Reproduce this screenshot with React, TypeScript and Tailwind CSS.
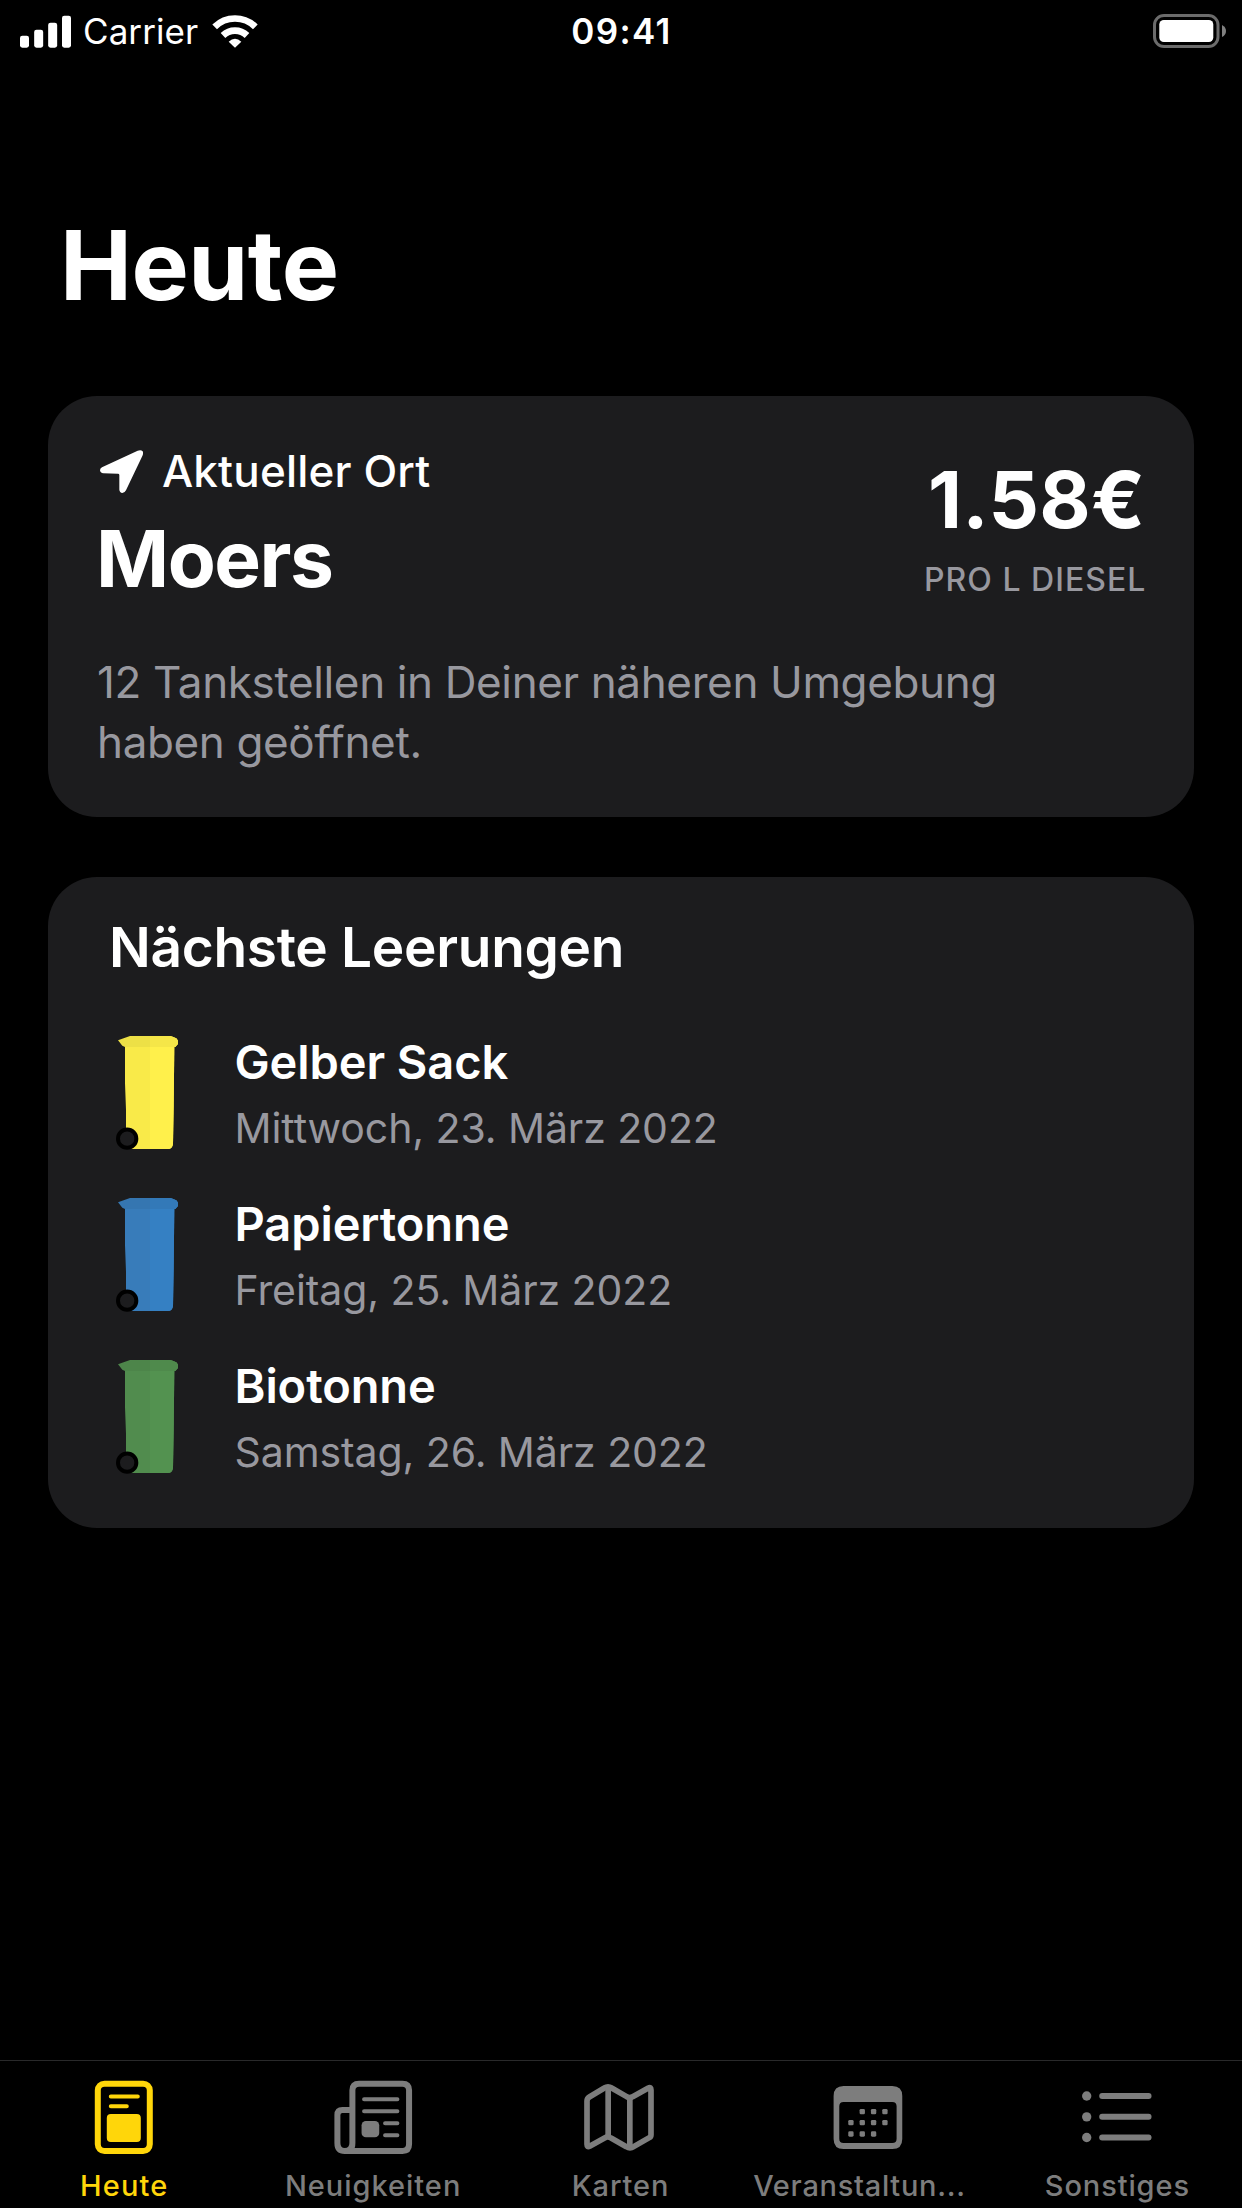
import type { ReactNode } from 'react';

type Bin = { name: string; date: string; left: string; right: string; lidLeft: string; lidRight: string };

const bins: Bin[] = [
  { name: 'Gelber Sack', date: 'Mittwoch, 23. März 2022', left: '#f9ea49', right: '#fff04b', lidLeft: '#ede046', lidRight: '#f5e648' },
  { name: 'Papiertonne', date: 'Freitag, 25. März 2022', left: '#387cba', right: '#3580c3', lidLeft: '#3576b1', lidRight: '#3379b8' },
  { name: 'Biotonne', date: 'Samstag, 26. März 2022', left: '#518c4e', right: '#539250', lidLeft: '#4d854a', lidRight: '#4f8a4c' },
];

function SignalIcon() {
  return (
    <svg className="h-[33px] w-[51px]" viewBox="60 40 153 99" fill="white">
      <rect x="60" y="102" width="27" height="36" rx="7" />
      <rect x="102.500" y="84" width="27" height="54" rx="7" />
      <rect x="144.500" y="63" width="27" height="75" rx="7" />
      <rect x="186" y="42" width="27" height="96" rx="7" />
    </svg>
  );
}

function WifiIcon() {
  return (
    <svg className="h-[34px] w-[46px]" viewBox="636 37 138 102" fill="none" stroke="white" strokeWidth="20">
      <path d="M644 75.500A87 87 0 0 1 766 75.500" />
      <path d="M669 101.500A52 52 0 0 1 741 101.500" />
      <path d="M686 120Q705 102 724 120L705 138Z" fill="white" stroke="none" />
    </svg>
  );
}

function BatteryIcon() {
  return (
    <svg className="h-[34px] w-[74px]" viewBox="0 0 74 34">
      <rect x="1.500" y="1.500" width="63.500" height="31" rx="9.500" fill="none" stroke="#6b6b6b" strokeWidth="3" />
      <rect x="6.300" y="6" width="54" height="22" rx="4.500" fill="white" />
      <path d="M69 11Q73 13 73 17T69 23Z" fill="#808080" />
    </svg>
  );
}

function LocationIcon() {
  return (
    <svg className="h-[43px] w-[43px]" viewBox="180 750 129 129" fill="white">
      <path d="M186 802L293 752Q303 748 308 754Q311 759 307 768L258 871Q254 879 247 879Q239 878 238 869V825Q238 821 234 821L190 820Q181 819 180 811Q180 805 186 802Z" />
    </svg>
  );
}

function BinIcon({ bin }: { bin: Bin }) {
  return (
    <svg className="mt-[7px] h-[115px] w-[63px] shrink-0" viewBox="78 78 189 345">
      <path d="M105 105H253L251 290L249 402Q247 417 234 417H108V300L105 220Z" fill={bin.left} />
      <path d="M180 105H253L251 290L249 402Q247 417 234 417H180Z" fill={bin.right} />
      <path d="M84 91L120 78H242L252 82Q262 85 264 92V102L256 111H105L97 107Z" fill={bin.lidLeft} />
      <path d="M180 78H242L252 82Q262 85 264 92V102L256 111H180Z" fill={bin.lidRight} />
      <circle cx="111.500" cy="386" r="27.500" fill="#1c1c1e" stroke="black" strokeWidth="12" />
    </svg>
  );
}

function TodayIcon() {
  return (
    <svg className="h-[76px] w-[80px]" viewBox="132.600 117 240 228" fill="none" stroke="currentColor">
      <rect x="174" y="131" width="156" height="202" rx="20" strokeWidth="18" />
      <path d="M213 169.500H294M213 198.500H261" strokeWidth="12" strokeLinecap="round" />
      <rect x="201" y="222" width="102" height="84" rx="12" fill="currentColor" stroke="none" />
    </svg>
  );
}

function NewsIcon() {
  return (
    <svg className="h-[76px] w-[80px]" viewBox="877.800 117 240 228" fill="none" stroke="currentColor">
      <path d="M913 333H1086Q1106 333 1106 313V151Q1106 131 1086 131H956Q936 131 936 151V309Q936 333 913 333Q891 333 891 309V225Q891 210 906 210H936" strokeWidth="18" />
      <path d="M971 177.500H1071M971 213.500H1071M1034 249.500H1071M1034 285.500H1071" strokeWidth="12" strokeLinecap="round" />
      <rect x="963.500" y="243" width="53" height="49" rx="13" fill="currentColor" stroke="none" />
    </svg>
  );
}

function MapIcon() {
  return (
    <svg className="h-[76px] w-[80px]" viewBox="123 117 240 228" fill="none" stroke="currentColor" strokeWidth="17" strokeLinejoin="round">
      <path d="M148 171L193 144Q204 137 215 144L260 170Q269 176 278 170L325 144Q333 140 333 150V284Q333 290 328 293L281 320Q270 327 259 320L213 294Q204 288 195 293L149 319Q141 323 141 313V183Q141 175 148 171Z" />
      <path d="M204.500 142V290M269.500 175V322" />
    </svg>
  );
}

function CalendarIcon() {
  const dots = [
    [968, 215], [1002, 215], [1036, 215],
    [934, 248], [968, 248], [1002, 248], [1036, 248],
    [934, 282], [968, 282], [1002, 282],
  ];
  return (
    <svg className="h-[76px] w-[80px]" viewBox="868.200 117 240 228" fill="currentColor">
      <path fillRule="evenodd" d="M912 138H1058Q1088 138 1088 168V297Q1088 327 1058 327H912Q882 327 882 297V168Q882 138 912 138ZM912 186Q899 186 899 199V296Q899 309 912 309H1058Q1071 309 1071 296V199Q1071 186 1058 186Z" />
      {dots.map(([x, y]) => (
        <rect key={`${x}-${y}`} x={x - 8} y={y - 8} width="16" height="16" rx="4" />
      ))}
    </svg>
  );
}

function ListIcon() {
  return (
    <svg className="h-[76px] w-[80px]" viewBox="353.400 117 240 228" fill="currentColor">
      {[168, 230.5, 292.5].map((y) => (
        <g key={y}>
          <circle cx="379.500" cy={y} r="14" />
          <rect x="417" y={y - 9} width="157" height="18" rx="9" />
        </g>
      ))}
    </svg>
  );
}

function Tab({ icon, label, active, className = '' }: { icon: ReactNode; label: string; active?: boolean; className?: string }) {
  return (
    <div className={`flex min-w-0 flex-1 flex-col items-center pt-[18px] ${active ? 'text-[#ffd60a]' : 'text-[#7d7d7d]'}`}>
      {icon}
      <span className={`mt-3 text-[29px] leading-[37px] font-medium whitespace-nowrap ${className}`}>{label}</span>
    </div>
  );
}

export default function App() {
  return (
    <div className="flex h-[2208px] w-[1242px] flex-col overflow-hidden bg-black font-[Inter,sans-serif] text-white">
      <header className="grid h-[62px] shrink-0 grid-cols-[1fr_auto_1fr] items-center pr-[15px] pl-5">
        <div className="flex items-center">
          <SignalIcon />
          <span className="ml-3 text-[35px] leading-[62px] tracking-[0.07px]">Carrier</span>
          <span className="ml-[14px]"><WifiIcon /></span>
        </div>
        <span className="pr-1 text-[35px] leading-[62px] font-semibold tracking-[1.4px]">09:41</span>
        <div className="flex justify-end">
          <BatteryIcon />
        </div>
      </header>

      <main className="flex flex-1 flex-col px-12">
        <h1 className="mt-[155px] pl-3 text-[96.3px] leading-[96px] font-bold tracking-[-0.47px]">Heute</h1>

        <section className="mt-[83px] h-[421px] rounded-[49px] bg-[#1c1c1e] px-12 pt-[45px]">
          <div className="flex justify-between">
            <div>
              <div className="flex items-center pl-1">
                <LocationIcon />
                <span className="ml-[19px] text-[44px] leading-[60px] font-medium tracking-[0.16px]">Aktueller Ort</span>
              </div>
              <div className="mt-2 text-[78.5px] leading-[99px] font-bold tracking-[-1.5px]">Moers</div>
            </div>
            <div className="w-[222px] pt-[18px] whitespace-nowrap">
              <div className="pl-1 text-[79px] leading-[81px] font-bold tracking-[0.3px]">1.58€</div>
              <div className="mt-5 text-[32px] leading-[40px] font-medium tracking-[1.02px] text-[#98989f]">PRO L DIESEL</div>
            </div>
          </div>
          <p className="mt-11 max-w-[960px] pl-px text-[44px] leading-[60px] tracking-[-0.37px] text-[#98989f]">
            12 Tankstellen in Deiner näheren Umgebung haben geöffnet.
          </p>
        </section>

        <section className="mt-[60px] h-[651px] rounded-[49px] bg-[#1c1c1e] pt-[35px]">
          <h2 className="pl-[61px] text-[55px] leading-[70px] font-semibold tracking-[-0.31px]">Nächste Leerungen</h2>
          <ul className="mt-[47px] flex flex-col gap-[30px] pl-[68px]">
            {bins.map((bin) => (
              <li key={bin.name} className="flex h-[132px] items-start">
                <BinIcon bin={bin} />
                <div className="ml-[55.5px]">
                  <div className="text-[47px] leading-[66px] font-semibold tracking-[-0.09px]">{bin.name}</div>
                  <div className="text-[41px] leading-[66px] tracking-[-0.08px] text-[#98989f]">{bin.date}</div>
                </div>
              </li>
            ))}
          </ul>
        </section>
      </main>

      <nav className="flex h-[148px] shrink-0 border-t border-[#29292a]">
        <Tab icon={<TodayIcon />} label="Heute" active className="tracking-[1.18px]" />
        <Tab icon={<NewsIcon />} label="Neuigkeiten" className="pl-px tracking-[0.98px]" />
        <Tab icon={<MapIcon />} label="Karten" className="pr-px tracking-[0.93px]" />
        <Tab icon={<CalendarIcon />} label="Veranstaltun..." className="pr-[20px] tracking-[0.7px]" />
        <Tab icon={<ListIcon />} label="Sonstiges" className="pr-px tracking-[0.89px]" />
      </nav>
    </div>
  );
}
